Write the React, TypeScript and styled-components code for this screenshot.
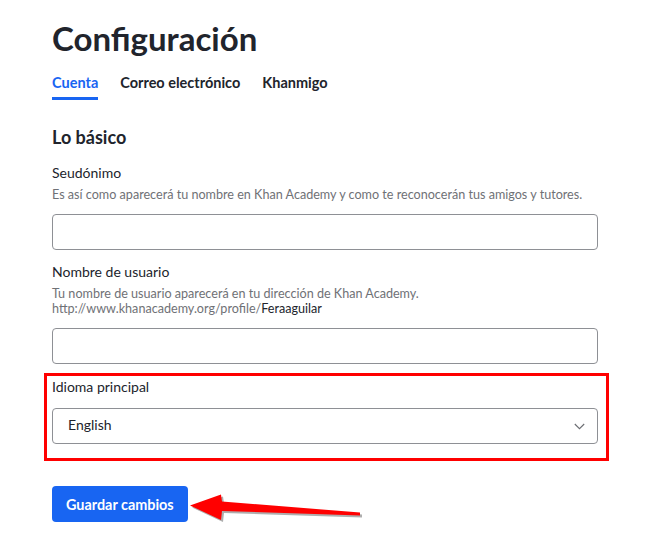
import { FunctionComponent } from "react";
import styled, { createGlobalStyle } from "styled-components";

const GlobalStyle = createGlobalStyle`
	html, body {
		margin: 0;
		padding: 0;
		background: #ffffff;
	}
	body {
		font-family: Lato, "Noto Sans", sans-serif;
		color: #21242c;
	}
`;

const Page = styled.div`
	position: relative;
	width: 652px;
	height: 554px;
	padding: 19px 54px 0 52px;
	box-sizing: border-box;
	overflow: hidden;
`;

const Title = styled.h1`
	margin: 0;
	font-size: 33px;
	line-height: 38px;
	font-weight: 700;
	letter-spacing: 0;
`;

const Tabs = styled.nav`
	display: flex;
	gap: 22px;
	margin-top: 17px;
`;

const Tab = styled.div<{ $active?: boolean }>`
	font-size: 14.5px;
	line-height: 18px;
	font-weight: 700;
	padding-bottom: 5px;
	color: ${(p) => (p.$active ? "#1865f2" : "#21242c")};
	border-bottom: 3px solid ${(p) => (p.$active ? "#1865f2" : "transparent")};
`;

const Section = styled.h2`
	margin: 26px 0 0;
	font-size: 18px;
	line-height: 22px;
	font-weight: 700;
`;

const Field = styled.div<{ $gap?: number }>`
	display: flex;
	flex-direction: column;
	margin-top: ${(p) => p.$gap ?? 12}px;
`;

const Label = styled.label`
	font-size: 14px;
	line-height: 20px;
`;

const Hint = styled.div`
	font-size: 12.6px;
	line-height: 15px;
	color: #6f7176;
	margin-top: 4px;

	b {
		font-weight: 400;
		color: #21242c;
	}
`;

const TextBox = styled.div`
	height: 36px;
	box-sizing: border-box;
	border: 1px solid #8e9095;
	border-radius: 4px;
	margin-top: 12px;
`;

const Highlight = styled.div`
	margin: 9px -11px 0 -8px;
	padding: 1px 8px 14px 5px;
	border: 3px solid #ff0000;
`;

const Select = styled.div`
	display: flex;
	align-items: center;
	justify-content: space-between;
	height: 36px;
	box-sizing: border-box;
	border: 1px solid #8e9095;
	border-radius: 4px;
	margin-top: 11px;
	padding: 0 12px 0 15px;
	font-size: 14px;
	line-height: 18px;
	padding-bottom: 2px;
`;

const Chevron = styled.svg`
	margin-top: 3px;
`;

const Button = styled.button`
	display: block;
	margin-top: 25px;
	height: 36px;
	padding: 0 14px;
	border: none;
	border-radius: 4px;
	background: #1865f2;
	color: #ffffff;
	font-family: Lato, "Noto Sans", sans-serif;
	font-size: 14.4px;
	font-weight: 700;
`;

const Arrow = styled.svg`
	position: absolute;
	left: 0;
	top: 0;
	pointer-events: none;
`;

const App: FunctionComponent = () => {
	return (
		<>
			<GlobalStyle />
			<Page>
				<Title>Configuración</Title>
				<Tabs>
					<Tab $active>Cuenta</Tab>
					<Tab>Correo electrónico</Tab>
					<Tab>Khanmigo</Tab>
				</Tabs>
				<Section>Lo básico</Section>
				<Field $gap={15}>
					<Label>Seudónimo</Label>
					<Hint>Es así como aparecerá tu nombre en Khan Academy y como te reconocerán tus amigos y tutores.</Hint>
					<TextBox />
				</Field>
				<Field>
					<Label>Nombre de usuario</Label>
					<Hint>
						Tu nombre de usuario aparecerá en tu dirección de Khan Academy.
						<br />
						http://www.khanacademy.org/profile/<b>Feraaguilar</b>
					</Hint>
					<TextBox />
				</Field>
				<Highlight>
					<Field $gap={0}>
						<Label>Idioma principal</Label>
						<Select>
							<span>English</span>
							<Chevron width="11" height="7" viewBox="0 0 11 7">
								<polyline points="0.8,1 5.5,5.7 10.2,1" fill="none" stroke="#6b6d72" strokeWidth="1.1" />
							</Chevron>
						</Select>
					</Field>
				</Highlight>
				<Button>Guardar cambios</Button>
				<Arrow width="652" height="554" viewBox="0 0 652 554">
					<polygon points="192,507.5 223,496.5 224,503.5 362,514.5 362,517.5 224,513 223,522" fill="#9a9a9a" opacity="0.8" />
					<polygon points="190,505.5 221,494.5 222,501.5 360,512.5 360,515.5 222,511 221,520" fill="#ff0000" />
				</Arrow>
			</Page>
		</>
	);
};

export default App;
